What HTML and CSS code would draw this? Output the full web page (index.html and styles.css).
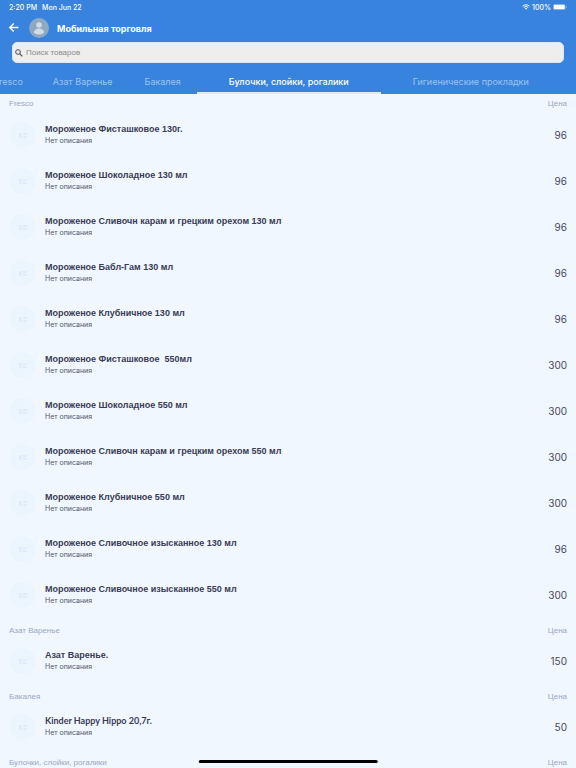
FILE: index.html
```html
<!DOCTYPE html>
<html lang="ru">
<head>
    <meta charset="UTF-8">
    <meta name="viewport" content="width=device-width, initial-scale=1.0">
    <title>Мобильная торговля</title>
    <link rel="stylesheet" href="styles.css">
</head>
<body>

<header class="topbar">
    <div class="status">
        <span>2:20 PM</span>
        <span>Mon Jun 22</span>
        <div class="status-right">
            <svg class="wifi" viewBox="0 0 16 12"><path d="M1 4.500a10 10 0 0 1 14 0M3.500 7a6.500 6.500 0 0 1 9 0" fill="none" stroke="#fff" stroke-width="1.900"/><path d="M5.500 9a3.600 3.600 0 0 1 5 0L8 11.700z" fill="#fff"/></svg>
            <span>100%</span>
            <svg class="battery" viewBox="0 0 28 12"><rect x="0.500" y="0.500" width="24" height="11" rx="3" fill="none" stroke="#fff" stroke-opacity=".5"/><rect x="1.500" y="1.500" width="22" height="9" rx="2" fill="#fff"/><path d="M26 4v4q1.500-.5 1.500-2T26 4z" fill="#fff" fill-opacity=".6"/></svg>
        </div>
    </div>

    <div class="title-row">
        <button class="back" aria-label="Назад">
            <svg viewBox="0 0 24 24"><path d="M21 11H4M11.500 3L3.500 11l8 8" fill="none" stroke="#fff" stroke-width="2.600"/></svg>
        </button>
        <svg class="user" viewBox="0 0 40 40"><circle cx="20" cy="20" r="20" fill="#8fa9c0"/><circle cx="20" cy="14" r="5.500" fill="#d3dce4"/><path d="M10 29c0-5 5-8 10-8s10 3 10 8c-2 3-6 4-10 4s-8-1-10-4z" fill="#d3dce4"/></svg>
        <h1>Мобильная торговля</h1>
    </div>

    <label class="search">
        <svg viewBox="0 0 24 24"><circle cx="9" cy="9" r="7" fill="none" stroke="#4a4a55" stroke-width="3"/><path d="M14 14L22 22" stroke="#4a4a55" stroke-width="3.600"/></svg>
        <input type="search" placeholder="Поиск товаров" aria-label="Поиск товаров">
    </label>

    <nav class="tabs">
        <button class="tab">Fresco</button>
        <button class="tab">Азат Варенье</button>
        <button class="tab">Бакалея</button>
        <button class="tab tab-wide active">Булочки, слойки, рогалики</button>
        <button class="tab tab-wide">Гигиенические прокладки</button>
    </nav>
</header>

<main class="catalog" id="catalog"></main>

<div class="home-indicator"></div>

<script src="script.js"></script>
</body>
</html>
```
FILE: styles.css
```css
* {
    box-sizing: border-box;
}

body {
    margin: 0;
    height: 100vh;
    display: flex;
    flex-direction: column;
    overflow: hidden;
    font-family: Inter, 'Liberation Sans', sans-serif;
    background-color: #f0f7ff;
    color: #3a3c56;
}

button {
    border: none;
    background: none;
    padding: 0;
    color: inherit;
    font-family: inherit;
    cursor: pointer;
}

.topbar {
    flex: none;
    background-color: #3783dd;
    color: #ffffff;
}

.status {
    display: flex;
    align-items: center;
    gap: 5px;
    height: 14px;
    padding: 0 9px;
    font-size: 7px;
    font-weight: 500;
}

.status-right {
    display: flex;
    align-items: center;
    gap: 2px;
    margin-left: auto;
}

.wifi {
    width: 8px;
    height: 6px;
}

.battery {
    width: 14px;
    height: 6px;
}

.title-row {
    display: flex;
    align-items: center;
    height: 28px;
    padding: 0 8px;
}

.back {
    width: 12px;
    height: 12px;
}

.back svg {
    display: block;
}

.user {
    width: 20px;
    height: 20px;
    margin: 0 8px 0 9px;
}

h1 {
    margin: 0;
    font-size: 9px;
    font-weight: 700;
}

.search {
    display: flex;
    align-items: center;
    gap: 3px;
    height: 21px;
    margin: 0 12px;
    padding: 0 2px;
    background-color: #eeeeee;
    border: 1px solid #dbe7f3;
    border-radius: 5px;
}

.search svg {
    width: 8px;
    height: 8px;
}

.search input {
    flex: 1;
    min-width: 0;
    padding: 0;
    border: none;
    outline: none;
    background: none;
    font-family: 'Liberation Sans', sans-serif;
    font-size: 8px;
}

.search input::placeholder {
    color: #8b8b8b;
}

/* the tab strip is scrolled a little to the left */
.tabs {
    display: flex;
    height: 31px;
    margin-left: -22px;
    padding-top: 7px;
    overflow: hidden;
}

.tab {
    flex: none;
    padding: 0 16px;
    border-bottom: 2px solid transparent;
    font-size: 9px;
    white-space: nowrap;
    color: #9cc4f3;
}

.tab:first-child {
    padding-right: 14px;
}

.tab-wide {
    padding: 0 32px;
}

.tab.active {
    font-weight: 500;
    color: #ffffff;
    border-bottom-color: #d9eafb;
}

.catalog {
    flex: 1;
    min-height: 0;
    overflow: hidden;
}

.section-head {
    display: flex;
    align-items: center;
    justify-content: space-between;
    height: 20px;
    padding: 4px 9px 0;
    font-family: 'Liberation Sans', sans-serif;
    font-size: 8px;
    color: #99a8bf;
}

.section:first-child .section-head {
    height: 18px;
    padding-top: 0;
}

.section-head h2 {
    margin: 0;
    font-size: 8px;
    font-weight: 400;
}

.products {
    margin: 0;
    padding: 0;
    list-style: none;
}

.product {
    display: flex;
    align-items: center;
    height: 46px;
    padding: 0 9px;
}

.thumb {
    width: 28px;
    height: 28px;
    margin-right: 8px;
}

.info {
    flex: 1;
    line-height: 12px;
}

.name {
    font-family: 'Liberation Sans', sans-serif;
    font-size: 9px;
    font-weight: 700;
    white-space: pre-wrap;
}

.name.latin {
    font-family: Lato, sans-serif;
}

.description {
    font-size: 7px;
    color: #55586d;
}

.price {
    font-size: 10px;
    color: #45475c;
}

.home-indicator {
    position: fixed;
    bottom: 5px;
    left: 50%;
    width: 31%;
    height: 3px;
    border-radius: 2px;
    background-color: #000000;
    transform: translateX(-50%);
}
```
FILE: script.js
```js
const sections = [
    { title: 'Fresco', items: [
        ['Мороженое Фисташковое 130г.', 96],
        ['Мороженое Шоколадное 130 мл', 96],
        ['Мороженое Сливочн карам и грецким орехом 130 мл', 96],
        ['Мороженое Бабл-Гам 130 мл', 96],
        ['Мороженое Клубничное 130 мл', 96],
        ['Мороженое Фисташковое  550мл', 300],
        ['Мороженое Шоколадное 550 мл', 300],
        ['Мороженое Сливочн карам и грецким орехом 550 мл', 300],
        ['Мороженое Клубничное 550 мл', 300],
        ['Мороженое Сливочное изысканное 130 мл', 96],
        ['Мороженое Сливочное изысканное 550 мл', 300]
    ] },
    { title: 'Азат Варенье', items: [['Азат Варенье.', 150]] },
    { title: 'Бакалея', items: [['Kinder Happy Hippo 20,7г.', 50]] },
    { title: 'Булочки, слойки, рогалики', items: [] }
];

const thumb = '<svg class="thumb" viewBox="0 0 28 28"><circle cx="13.500" cy="14" r="13" fill="#ebf5fe"/>' +
    '<path d="M10 12h3v5h-3zM14 12h4v2h-4zM14 15h4v2h-4z" fill="#dfedfb"/></svg>';

function renderProduct([name, price]) {
    const nameClass = /^[a-z]/i.test(name) ? 'name latin' : 'name';
    return `<li class="product">${thumb}
        <div class="info">
            <div class="${nameClass}">${name}</div>
            <div class="description">Нет описания</div>
        </div>
        <span class="price">${price}</span>
    </li>`;
}

document.getElementById('catalog').innerHTML = sections.map(section =>
    `<section class="section">
        <div class="section-head"><h2>${section.title}</h2><span>Цена</span></div>
        <ul class="products">${section.items.map(renderProduct).join('')}</ul>
    </section>`
).join('');
```
